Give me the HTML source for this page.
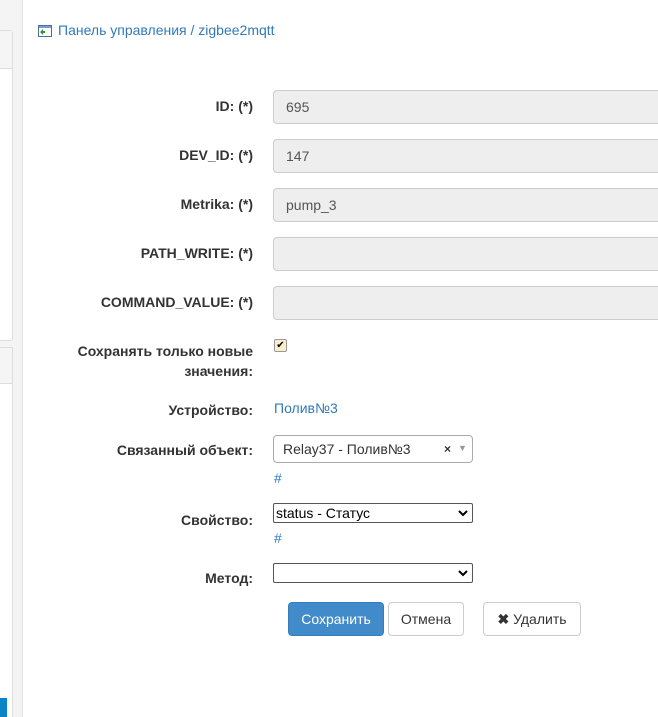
<html><head><style>
html,body{margin:0;width:658px;height:717px;overflow:hidden}
body{background:#fff;font-family:"Liberation Sans",Arial,sans-serif;font-size:14px;color:#333;position:relative}
*{box-sizing:border-box}
.a{position:absolute}
.lbl{position:absolute;right:405px;font-weight:bold;text-align:right;line-height:20px}
.inp{position:absolute;left:273px;width:420px;height:34px;background:#eee;border:1px solid #ccc;border-radius:4px;line-height:32px;padding-left:12px;color:#555}
.sel{position:absolute;left:273px;width:200px;height:20px;border:1px solid #555;border-radius:2px;font-size:14px;line-height:18px;padding-left:2px;color:#000}
.chev{position:absolute;right:4px;top:5px}
.btn{position:absolute;top:602px;height:34px;border:1px solid #ccc;border-radius:4px;line-height:32px;text-align:center;background:#fff}
</style></head><body>
<div class="a" style="left:0;top:0;width:23px;height:717px;background:#f4f4f4;border-right:1px solid #e3e3e3"></div>
<div class="a" style="left:0;top:30px;width:13px;height:311px;background:#fff;border:1px solid #ddd;border-left:none;border-radius:0 3px 3px 0"></div>
<div class="a" style="left:0;top:31px;width:12px;height:38px;background:#f5f5f5;border-bottom:1px solid #ddd"></div>
<div class="a" style="left:0;top:347px;width:13px;height:380px;background:#fff;border:1px solid #ddd;border-left:none"></div>
<div class="a" style="left:0;top:348px;width:12px;height:36px;background:#f5f5f5;border-bottom:1px solid #ddd"></div>
<div class="a" style="left:0;top:698px;width:7px;height:19px;background:#0a84c6"></div>
<svg class="a" style="left:38px;top:25px" width="14" height="12"><rect x="0.5" y="0.5" width="13" height="11" fill="#fff" stroke="#4a6ea8"/><rect x="1" y="1" width="12" height="2" fill="#7a9cd0"/><path d="M2 7l3-3v2h2v2h-2v2z" fill="#2a9a2a"/></svg>
<div class="a" style="left:58px;top:22px;color:#337ab7">Панель управления / zigbee2mqtt</div>

<div class="lbl" style="top:96px">ID: (*)</div><div class="inp" style="top:90px">695</div>
<div class="lbl" style="top:145px">DEV_ID: (*)</div><div class="inp" style="top:139px">147</div>
<div class="lbl" style="top:194px">Metrika: (*)</div><div class="inp" style="top:188px">pump_3</div>
<div class="lbl" style="top:243px">PATH_WRITE: (*)</div><div class="inp" style="top:237px"></div>
<div class="lbl" style="top:292px">COMMAND_VALUE: (*)</div><div class="inp" style="top:286px"></div>
<div class="lbl" style="top:341px">Сохранять только новые<br>значения:</div>
<div class="a" style="left:274px;top:339px;width:13px;height:13px;background:#fbeccb;border:1px solid #999;border-radius:2px;font-size:10px;line-height:11px;text-align:center;color:#000">✔</div>
<div class="lbl" style="top:400px">Устройство:</div><div class="a" style="left:274px;top:400px;color:#337ab7">Полив№3</div>
<div class="lbl" style="top:440px">Связанный объект:</div>
<div class="a" style="left:273px;top:435px;width:200px;height:28px;border:1px solid #aaa;border-radius:4px;line-height:26px"><span style="margin-left:9px">Relay37 - Полив№3</span><span class="a" style="left:170px;font-size:12px;font-weight:bold">×</span><span class="a" style="left:184px;top:-1px;color:#999;font-size:9px">▼</span></div>
<div class="a" style="left:274px;top:470px;color:#337ab7">#</div>
<div class="lbl" style="top:510px">Свойство:</div>
<div class="sel" style="top:503px">status - Статус<svg class="chev" width="10" height="8"><path d="M1 2l4 4 4-4" fill="none" stroke="#000" stroke-width="2"/></svg></div>
<div class="a" style="left:274px;top:530px;color:#337ab7">#</div>
<div class="lbl" style="top:568px">Метод:</div>
<div class="sel" style="top:563px"><svg class="chev" width="10" height="8"><path d="M1 2l4 4 4-4" fill="none" stroke="#000" stroke-width="2"/></svg></div>
<div class="btn" style="left:288px;width:96px;background:#428bca;border-color:#357ebd;color:#fff">Сохранить</div>
<div class="btn" style="left:388px;width:76px">Отмена</div>
<div class="btn" style="left:483px;width:98px"><b>✖</b> Удалить</div>
</body></html>
